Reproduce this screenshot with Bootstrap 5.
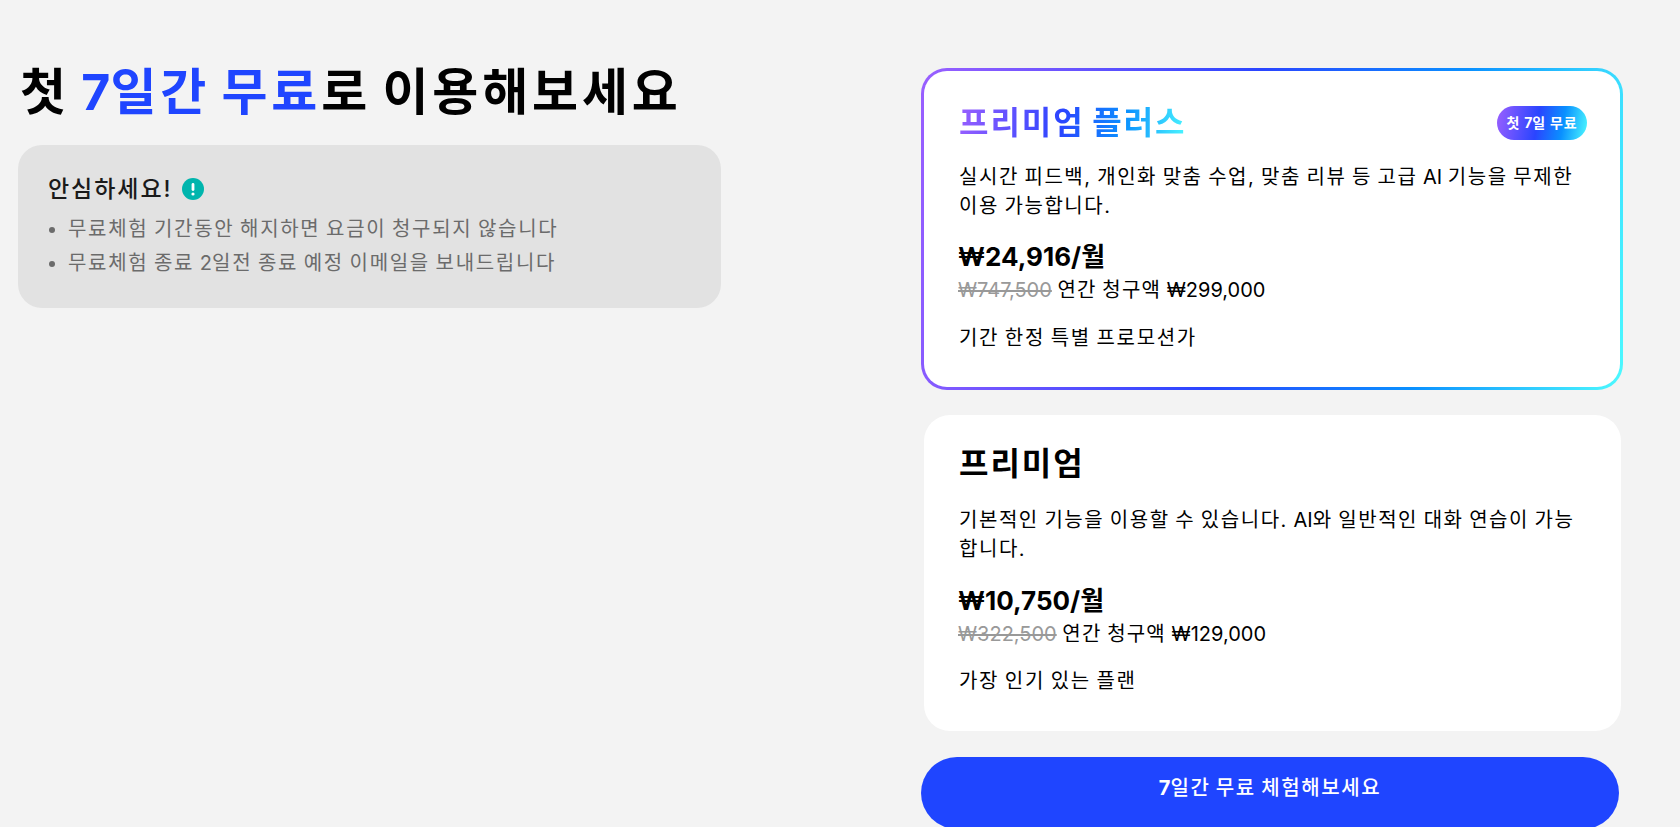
<!DOCTYPE html>
<html lang="ko">
<head>
  <meta charset="UTF-8" />
  <meta name="viewport" content="width=device-width, initial-scale=1.0"/>
  <title>7일간 무료 체험</title>
  <link href="https://cdn.jsdelivr.net/npm/bootstrap@5.3.0/dist/css/bootstrap.min.css" rel="stylesheet" />
  <style>
    :root { --grad: linear-gradient(100deg, #9a5fff 0%, #2a45ff 45%, #0a90ff 72%, #4dfaff 100%); }
    html, body { height: 100%; overflow: hidden; }
    body { background-color: #f3f3f3; font-family: Inter, "Noto Sans CJK KR", sans-serif; color: #000; letter-spacing: .075em; word-spacing: -.075em; }
    /* latin runs keep normal spacing, only hangul is spread */
    .en { letter-spacing: 0; word-spacing: 0; }
    .page-wrap { padding: 64px 57px 0 18px; }
    .left-col { width: 703px; }
    .right-col { width: 702px; padding-top: 4px; }
    .main-title { font-size: 50px; font-weight: 700; line-height: 56px; margin: 0 0 25px 2px; letter-spacing: .077em; word-spacing: -.085em; }
    .main-title span.hl { color: #1f45ff; }
    .notice-box { background: #e2e2e2; border-radius: 24px; height: 163px; padding: 28px 30px; }
    .notice-title { font-size: 23px; font-weight: 500; line-height: 32px; color: #1a1a1a; margin-bottom: 7px; gap: 9px; letter-spacing: .085em; }
    .notice-icon { width: 22px; height: 22px; }
    .notice-list { font-size: 20px; line-height: 34px; color: #6b6b6b; padding-left: 20px; margin: 0; letter-spacing: .085em; word-spacing: -.085em; }
    .plan-card { border: 0; border-radius: 26px; background: #fff; padding: 25px 35px 0 34px; height: 316px; margin: 0 2px 0 3px; }
    .plan-plus { border: 3px solid transparent; background: linear-gradient(#fff, #fff) padding-box, var(--grad) border-box; height: 322px; margin: 0 0 25px; padding: 28px 35px 0 34px; }
    .plan-name { font-size: 32px; font-weight: 700; line-height: 48px; margin: 0; padding-left: 1px; letter-spacing: .062em; word-spacing: -.062em; }
    .grad-text { background: var(--grad); -webkit-background-clip: text; background-clip: text; color: transparent; }
    .free-tag { background: var(--grad); color: #fff; font-size: 14px; font-weight: 700; width: 90px; height: 34px; line-height: 34px; text-align: center; border-radius: 17px; margin-right: -2px; letter-spacing: .06em; word-spacing: -.02em; }
    .plan-desc { font-size: 20px; line-height: 29px; margin: 18px 0 0; padding: 0 8px 0 1px; letter-spacing: .077em; word-spacing: -.077em; }
    .plan-price { font-size: 26px; font-weight: 700; line-height: 36px; margin-top: 19px; letter-spacing: 0; word-spacing: 0; }
    .plan-year { font-size: 20px; line-height: 30px; margin-top: 0; }
    .plan-year s { color: #999; }
    .plan-note { font-size: 20px; line-height: 30px; margin-top: 17px; padding-left: 1px; letter-spacing: .085em; word-spacing: -.085em; }
    .plan-plus .plan-desc { margin-top: 16px; }
    .plan-plus .plan-price { margin-top: 18px; }
    .plan-plus .plan-note { margin-top: 18px; }
    .try-btn { background: #1f45ff; border: 0; color: #fff; font-size: 20px; font-weight: 500; width: 698px; height: 72px; border-radius: 36px; padding: 0 0 10px; margin-top: 26px; letter-spacing: .08em; word-spacing: -.08em; }
    .try-btn:hover { background: #1f45ff; color: #fff; }
    .try-btn .en { font-weight: 700; }
  </style>
</head>
<body>
  <div class="page-wrap d-flex justify-content-between align-items-start">
    <div class="left-col">
      <h1 class="main-title">첫 <span class="hl"><span class="en">7</span>일간 무료</span>로 이용해보세요</h1>
      <div class="notice-box">
        <div class="notice-title d-flex align-items-center">
          안심하세요!
          <svg class="notice-icon" viewBox="0 0 22 22"><circle cx="11" cy="11" r="11" fill="#00b5ad"/><rect x="9.6" y="5" width="2.8" height="8" rx="1.4" fill="#fff"/><circle cx="11" cy="16" r="1.6" fill="#fff"/></svg>
        </div>
        <ul class="notice-list">
          <li>무료체험 기간동안 해지하면 요금이 청구되지 않습니다</li>
          <li>무료체험 종료 <span class="en">2</span>일전 종료 예정 이메일을 보내드립니다</li>
        </ul>
      </div>
    </div>

    <div class="right-col">
      <div class="card plan-card plan-plus">
        <div class="d-flex justify-content-between align-items-center">
          <h2 class="plan-name"><span class="grad-text">프리미엄 플러스</span></h2>
          <div class="free-tag">첫 <span class="en">7</span>일 무료</div>
        </div>
        <p class="plan-desc">실시간 피드백, 개인화 맞춤 수업, 맞춤 리뷰 등 고급 <span class="en">AI</span> 기능을 무제한 이용 가능합니다.</p>
        <div class="plan-price">₩24,916/월</div>
        <div class="plan-year"><s class="en">₩747,500</s> 연간 청구액 <span class="en">₩299,000</span></div>
        <div class="plan-note">기간 한정 특별 프로모션가</div>
      </div>

      <div class="card plan-card">
        <h2 class="plan-name">프리미엄</h2>
        <p class="plan-desc">기본적인 기능을 이용할 수 있습니다. <span class="en">AI</span>와 일반적인 대화 연습이 가능합니다.</p>
        <div class="plan-price">₩10,750/월</div>
        <div class="plan-year"><s class="en">₩322,500</s> 연간 청구액 <span class="en">₩129,000</span></div>
        <div class="plan-note">가장 인기 있는 플랜</div>
      </div>

      <button class="btn try-btn d-block" type="button"><span class="en">7</span>일간 무료 체험해보세요</button>
    </div>
  </div>
  <script src="https://cdn.jsdelivr.net/npm/bootstrap@5.3.0/dist/js/bootstrap.bundle.min.js"></script>
</body>
</html>
